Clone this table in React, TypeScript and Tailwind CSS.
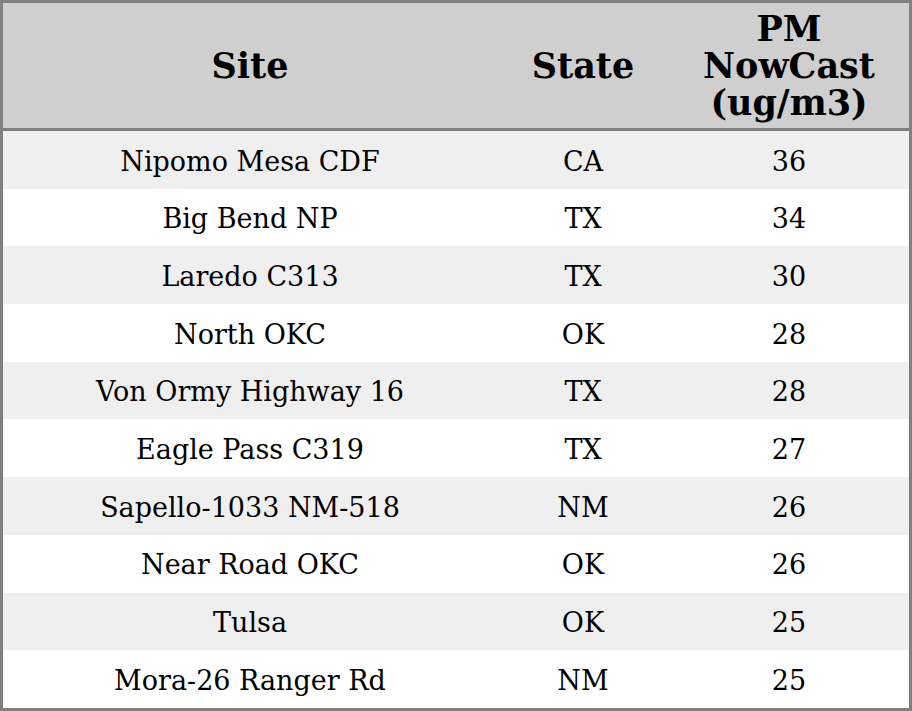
import React from 'react';

const rows: [string, string, string][] = [
  ['Nipomo Mesa CDF', 'CA', '36'],
  ['Big Bend NP', 'TX', '34'],
  ['Laredo C313', 'TX', '30'],
  ['North OKC', 'OK', '28'],
  ['Von Ormy Highway 16', 'TX', '28'],
  ['Eagle Pass C319', 'TX', '27'],
  ['Sapello-1033 NM-518', 'NM', '26'],
  ['Near Road OKC', 'OK', '26'],
  ['Tulsa', 'OK', '25'],
  ['Mora-26 Ranger Rd', 'NM', '25'],
];

export default function App() {
  return (
    <div className="w-[912px] h-[711px] border-[3px] border-[#808080] bg-white text-black font-['DejaVu_Serif',serif]">
      <div className="grid grid-cols-[494px_172px_240px] h-[125px] bg-[#cfcfcf] border-b-[3px] border-[#808080] box-content text-[35px] font-bold leading-[37px]">
        <div className="flex items-center justify-center">Site</div>
        <div className="flex items-center justify-center">State</div>
        <div className="flex items-center justify-center text-center">
          PM
          <br />
          NowCast
          <br />
          (ug/m3)
        </div>
      </div>
      {rows.map(([site, state, value], i) => (
        <div
          key={i}
          className={
            'grid grid-cols-[494px_172px_240px] h-[57.7px] pt-1 items-center text-center text-[27px] ' +
            (i % 2 === 0 ? 'bg-[#efefef]' : 'bg-white')
          }
        >
          <div>{site}</div>
          <div>{state}</div>
          <div>{value}</div>
        </div>
      ))}
    </div>
  );
}
